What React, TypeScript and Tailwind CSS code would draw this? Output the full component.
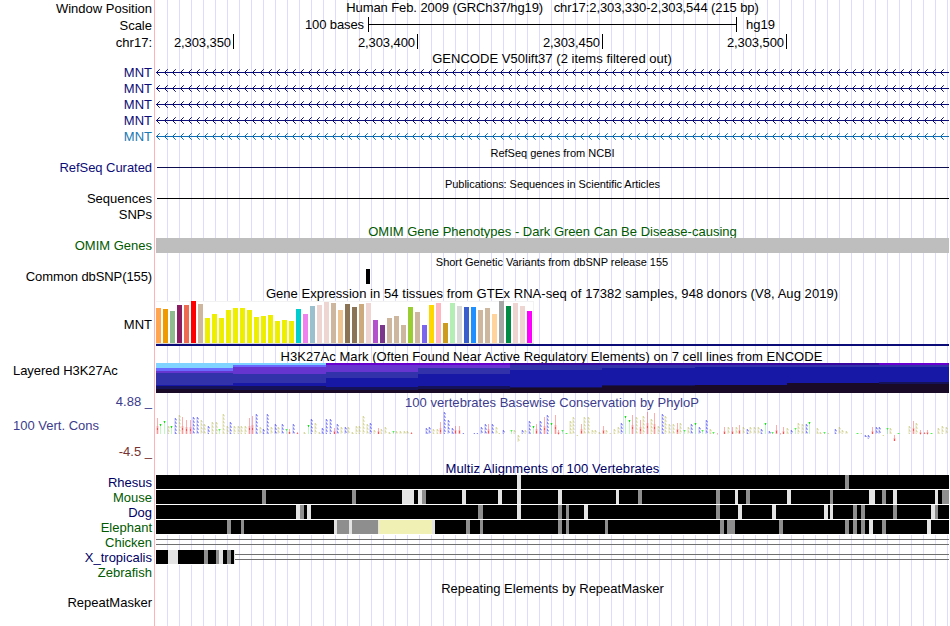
import type { ReactNode } from "react";
import { clsx } from "clsx";

type Span = [from: number, to: number, fill: string];

// left edge of the data area, every track is drawn from here
const X0 = 156;
const WIDTH = 793;

const LIGHT = "#e3e3e3";
const GRAY = "#8e8e8e";
const YELLOW = "#f0f0b4";

const GTEX_HEIGHTS = [
  35, 34, 32, 38, 38, 42, 39, 25, 29, 25, 33, 35, 35, 33, 26, 27, 28, 22, 23, 22, 34, 29, 37, 38, 41, 40, 33,
  39, 36, 39, 40, 23, 18, 25, 27, 18, 36, 31, 18, 38, 40, 20, 40, 37, 36, 36, 33, 35, 29, 42, 37, 40, 37, 32,
];

const GTEX_COLORS = [
  "#ffa54f", "#ee9a00", "#8fbc8f", "#8b1c62", "#ee6a50", "#ff0000", "#cdb79e",
  ...Array<string>(13).fill("#eeee00"),
  "#00cdcd", "#ee82ee", "#9ac0cd", "#eed5d2", "#eed5d2", "#cdb79e", "#eec591", "#8b7355", "#8b7355",
  "#cdaa7d", "#eed5d2", "#b452cd", "#7a378b", "#cdb79e", "#cdb79e", "#cdb79e", "#9acd32", "#cdb79e",
  "#7a67ee", "#ffd700", "#ffb6c1", "#cd9b1d", "#b4eeb4", "#d9d9d9", "#3a5fcd", "#1e90ff", "#cdb79e",
  "#cdb79e", "#ffd39b", "#a6a6a6", "#008b45", "#eed5d2", "#eed5d2", "#ff00ff",
];

const SKY = "#80d2ff";
const PERI = "#6a6aff";
const PURPLE = "#6634ce";
const VIOLET = "#6a00d0";
const DEEP = "#3a06a0";
const INDIGO = "#3232aa";
const BLUE = "#1818a6";
const NAVY = "#16125a";
const DARK = "#190a28";

// [from, to, layers as [y, colour] from the top of the band]
const H3K27AC: [number, number, [number, string][]][] = [
  [156, 233, [[0, SKY], [5, PERI], [8, PURPLE], [10, INDIGO], [22, BLUE], [23, NAVY], [26, DARK]]],
  [233, 326, [[0, SKY], [2, PERI], [4, PURPLE], [11, INDIGO], [20, BLUE], [23, NAVY], [27, DARK]]],
  [326, 418, [[0, VIOLET], [2, PURPLE], [9, INDIGO], [15, BLUE], [24, NAVY], [27, DARK]]],
  [418, 510, [[0, VIOLET], [2, PURPLE], [5, INDIGO], [11, BLUE], [23, NAVY], [26, DARK]]],
  [510, 602, [[0, DEEP], [2, INDIGO], [7, BLUE], [24, NAVY], [25, DARK]]],
  [602, 695, [[0, DEEP], [2, INDIGO], [5, BLUE], [22, NAVY], [23, DARK]]],
  [695, 787, [[0, DEEP], [2, INDIGO], [4, BLUE], [22, DARK]]],
  [787, 879, [[0, DEEP], [2, INDIGO], [4, BLUE], [20, DARK]]],
  [879, 949, [[0, VIOLET], [2, INDIGO], [4, BLUE], [19, NAVY], [21, DARK]]],
];

// one entry per base: nucleotide and its height, "-" where there is no score
const PHYLOP =
  "a16 t10 t13 g8 t8 c16 g19 a17 a14 a14 c17 c17 g14 g10 c8 g12 g12 t5 g20 g8 c12 g8 g8 g8 g8 a16 a18 c20 g7 c5 " +
  "c20 g7 c10 g7 c10 t5 a5 c10 a2 - g2 t9 c15 g11 g2 c6 c15 c15 a6 c10 g7 c7 g7 g2 g8 g8 g18 g10 c11 g4 " +
  "a6 g5 g7 g2 t3 g3 g3 g3 g3 a2 - - - c6 c7 g5 g5 a12 c22 c14 c6 a8 a8 c1 - - c1 c1 c7 c10 " +
  "a10 c10 g7 g1 c4 - t4 g4 g-7 c4 g4 c13 t8 a10 c13 a17 c19 t11 a19 a4 t4 t1 g13 g17 g-1 a10 g17 g17 g4 g4 " +
  "g2 a8 g4 g1 g5 g7 c11 t18 t14 a19 g17 a14 g18 a22 g15 a21 g8 c20 g18 g10 g10 a11 g11 t4 g7 c10 t11 c7 t4 c14 " +
  "g5 t2 a1 - a7 g7 a7 g7 a9 g7 c5 g7 g7 g7 c5 t11 c3 t2 a9 a1 a7 g6 c4 t6 g11 g10 c10 t12 - g6 " +
  "g2 t2 g1 - c5 g7 g4 g3 - - t1 g1 c-2 c-4 a7 c7 c7 g-1 t6 g6 a-6 t1 - - g8 a13 g11 a4 a2 a4 " +
  "t1 - g6 g8 g7";

const BASE_COLORS: Record<string, string> = { a: "#ff3030", t: "#00e800", c: "#3030f0", g: "#a8a830" };

const RHESUS: Span[] = [[517, 521, LIGHT], [845, 849, GRAY]];
const MOUSE: Span[] = [
  [262, 266, GRAY], [352, 356, GRAY], [402, 414, LIGHT], [418, 422, LIGHT], [422, 426, GRAY],
  [462, 466, LIGHT], [498, 502, LIGHT], [517, 521, LIGHT], [558, 562, LIGHT], [616, 619, LIGHT],
  [638, 642, GRAY], [716, 720, GRAY], [735, 738, LIGHT], [746, 750, GRAY], [787, 791, LIGHT],
  [830, 833, GRAY], [869, 875, LIGHT], [882, 886, GRAY], [893, 897, LIGHT], [935, 938, LIGHT], [942, 949, GRAY],
];
const DOG: Span[] = [
  [296, 300, LIGHT], [300, 304, GRAY], [307, 311, LIGHT], [478, 483, GRAY], [517, 521, LIGHT],
  [558, 562, GRAY], [566, 569, GRAY], [584, 588, LIGHT], [716, 720, GRAY], [738, 742, LIGHT],
  [772, 776, LIGHT], [824, 828, LIGHT], [830, 833, LIGHT], [853, 857, GRAY], [861, 865, GRAY],
  [893, 897, GRAY], [931, 935, LIGHT], [935, 938, GRAY],
];
const ELEPHANT: Span[] = [
  [227, 231, GRAY], [241, 244, GRAY], [334, 337, LIGHT], [337, 349, GRAY], [349, 352, LIGHT],
  [352, 378, GRAY], [378, 379, LIGHT], [379, 432, YELLOW], [432, 435, LIGHT], [466, 470, GRAY],
  [480, 483, GRAY], [558, 562, GRAY], [566, 569, GRAY], [605, 608, GRAY], [720, 724, GRAY],
  [727, 735, GRAY], [779, 783, GRAY], [845, 849, GRAY], [853, 857, GRAY], [861, 865, GRAY],
  [869, 873, LIGHT], [882, 886, GRAY], [927, 931, LIGHT],
];
const XENOPUS: Span[] = [
  [168, 178, LIGHT], [204, 208, GRAY], [216, 219, GRAY], [219, 223, LIGHT], [227, 231, GRAY], [234, 235, LIGHT],
];

function Row({ label, height, className, children }: {
  label?: string;
  height: string;
  className?: string;
  children?: ReactNode;
}) {
  return (
    <div className={clsx("flex shrink-0", height)}>
      <div className={clsx("flex w-[152px] shrink-0 items-center justify-end whitespace-nowrap", className)}>
        {label}
      </div>
      <div className="ml-1 w-[793px] shrink-0">{children}</div>
    </div>
  );
}

function Title({ height, className, children }: { height: string; className?: string; children: ReactNode }) {
  return (
    <div className={clsx("ml-[156px] flex w-[793px] shrink-0 items-center justify-center whitespace-pre", height, className)}>
      {children}
    </div>
  );
}

function Guides() {
  return (
    <svg className="absolute inset-0" width="949" height="626" shapeRendering="crispEdges">
      <rect x="154" y="0" width="1" height="626" fill="#ffb4b4" />
      {Array.from({ length: 66 }, (_, i) => (
        <rect key={i} x={167 + i * 12} y="0" width="1" height="626" fill="#dcdcff" />
      ))}
    </svg>
  );
}

function Gene({ color }: { color: string }) {
  return (
    <svg width={WIDTH} height="16" shapeRendering="crispEdges" fill={color}>
      <rect x="0" y="8" width={WIDTH} height="1" />
      {Array.from({ length: 99 }, (_, i) => {
        const x = 1 + i * 8;
        return (
          <g key={i}>
            <rect x={x} y="7" width="1" height="3" />
            <rect x={x + 1} y="6" width="1" height="1" />
            <rect x={x + 1} y="10" width="1" height="1" />
            <rect x={x + 2} y="5" width="1" height="1" opacity="0.75" />
            <rect x={x + 2} y="11" width="1" height="1" opacity="0.75" />
          </g>
        );
      })}
    </svg>
  );
}

function Tick({ label, width }: { label: string; width: string }) {
  return (
    <div className={clsx("flex h-[15px] shrink-0 items-center justify-end border-r border-black pr-[2px] pt-px tracking-[-0.08px]", width)}>
      {label}
    </div>
  );
}

function Gtex() {
  return (
    <svg width={WIDTH} height="45" shapeRendering="crispEdges">
      <rect width="378" height="43" fill="#fff" />
      <rect width="378" height="1" fill="#f2f2f2" />
      <rect x="377" width="1" height="43" fill="#f2f2f2" />
      {GTEX_HEIGHTS.map((h, i) => (
        <rect key={i} x={i * 7} y={42 - h} width="5" height={h} fill={GTEX_COLORS[i]} />
      ))}
      <rect y="42" width="378" height="1" fill="#d8d8d8" />
      <rect y="43" width={WIDTH} height="2" fill="#0c0c78" />
    </svg>
  );
}

function Histone() {
  return (
    <svg width={WIDTH} height="30" shapeRendering="crispEdges">
      {H3K27AC.map(([from, to, layers]) =>
        layers.map(([y, fill]) => (
          <rect key={`${from}-${y}`} x={from - X0} y={y} width={to - from} height={30 - y} fill={fill} />
        ))
      )}
    </svg>
  );
}

function PhyloP() {
  const base = 24;
  return (
    <svg width={WIDTH} height="34">
      {PHYLOP.split(" ").map((item, i) => {
        if (item === "-") return null;
        const kind = item[0];
        const score = Number(item.slice(1));
        const h = Math.abs(score);
        const y = score > 0 ? base - h : base + 1;
        const x = Math.floor(i * 3.688);
        const fill = BASE_COLORS[kind];
        if (kind === "t") {
          return (
            <g key={i} fill={fill}>
              <rect x={x + 1} y={y} width="1" height={Math.min(h, 2)} opacity={h > 7 ? 0.9 : 0.4} />
              <rect x={x} y={y} width="3" height="1" opacity="0.3" />
              <rect x={x + 1} y={y} width="1" height={h} opacity="0.25" />
            </g>
          );
        }
        if (kind === "a") {
          return (
            <g key={i} fill={fill}>
              <rect x={x + 1} y={y} width="1" height={h} opacity="0.4" />
              <rect x={x} y={y + Math.round(h / 2)} width="3" height={h - Math.round(h / 2)} opacity="0.15" />
              <rect x={x + 1} y={y + Math.round(h * 0.65)} width="1" height={Math.min(h / 3, 2)} opacity="0.7" />
            </g>
          );
        }
        const strong = kind === "c";
        return (
          <g key={i} stroke={fill} fill="none">
            <path d={`M${x + 1} ${y}v${h}`} strokeWidth="2" opacity="0.16" />
            <path d={`M${x + 1.5} ${y}v${h}`} strokeDasharray="2 1.5" opacity={strong ? 0.5 : 0.35} />
            <path d={`M${x + 2.5} ${y + 1}v${Math.max(h - 1, 0)}`} strokeDasharray="1.5 2" opacity={strong ? 0.4 : 0.25} />
          </g>
        );
      })}
    </svg>
  );
}

function Alignment({ spans, end = 949 }: { spans: Span[]; end?: number }) {
  return (
    <svg width={WIDTH} height="15" shapeRendering="crispEdges">
      <rect width={WIDTH} height="15" fill="#fff" />
      <rect width={end - X0} height="14" fill="#000" />
      {spans.map(([from, to, fill]) => (
        <rect key={from} x={from - X0} width={to - from} height="14" fill={fill} />
      ))}
    </svg>
  );
}

export default function App() {
  return (
    <div className="relative h-[626px] w-[950px] overflow-hidden bg-white font-['Liberation_Sans',Arial,sans-serif] text-[13px] leading-none text-black">
      <Guides />
      <div className="relative flex flex-col">
        <Row label="Window Position" height="h-[17px]">
          <div className="flex h-[14px] items-center justify-center whitespace-pre tracking-[-0.09px]">
            Human Feb. 2009 (GRCh37/hg19)   chr17:2,303,330-2,303,544 (215 bp)
          </div>
        </Row>
        <Row label="Scale" height="h-[17px]">
          <div className="flex h-[15px] items-center">
            <span className="w-[208px] text-right tracking-[-0.1px]">100 bases</span>
            <div className="ml-1 flex h-full w-[369px] items-center border-x border-black">
              <div className="h-px w-full bg-black" />
            </div>
            <span className="ml-[9px]">hg19</span>
          </div>
        </Row>
        <Row label="chr17:" height="h-[16px]">
          <div className="flex">
            <Tick label="2,303,350" width="w-[78px]" />
            <Tick label="2,303,400" width="w-[184px]" />
            <Tick label="2,303,450" width="w-[185px]" />
            <Tick label="2,303,500" width="w-[184px]" />
          </div>
        </Row>
        <Title height="h-[14px]" className="pr-px pt-[3px] tracking-[0.03px]">GENCODE V50lift37 (2 items filtered out)</Title>

        <Row label="MNT" height="h-[16px]" className="text-[#0c0c78]"><Gene color="#0c0c78" /></Row>
        <Row label="MNT" height="h-[16px]" className="text-[#0c0c78]"><Gene color="#0c0c78" /></Row>
        <Row label="MNT" height="h-[16px]" className="text-[#0c0c78]"><Gene color="#0c0c78" /></Row>
        <Row label="MNT" height="h-[16px]" className="text-[#0c0c78]"><Gene color="#0c0c78" /></Row>
        <Row label="MNT" height="h-[16px]" className="text-[#1878b4]"><Gene color="#0c6cb4" /></Row>

        <Title height="h-[16px]" className="pt-[2px] text-[11px]">RefSeq genes from NCBI</Title>
        <Row label="RefSeq Curated" height="h-[15px]" className="tracking-[-0.05px] text-[#0c0c78]">
          <div className="ml-px mt-[7px] h-px bg-[#0c0c50]" />
        </Row>
        <Title height="h-[16px]" className="pt-[2px] text-[11px] tracking-[-0.06px]">
          Publications: Sequences in Scientific Articles
        </Title>
        <Row label="Sequences" height="h-[15px]">
          <div className="ml-px mt-[7px] h-px bg-black" />
        </Row>
        <Row label="SNPs" height="h-[16px]" />

        <Title height="h-[16px]" className="pt-[2px] text-[#005a00]">
          OMIM Gene Phenotypes - Dark Green Can Be Disease-causing
        </Title>
        <Row label="OMIM Genes" height="h-[15px]" className="text-[#005a00]">
          <div className="h-full bg-[#bebebe]" />
        </Row>
        <Title height="h-[16px]" className="pr-px pt-[2px] text-[11px] tracking-[-0.02px]">
          Short Genetic Variants from dbSNP release 155
        </Title>
        <Row label="Common dbSNP(155)" height="h-[16px]" className="pb-[2px] tracking-[-0.1px]">
          <div className="ml-[210px] h-[15px] w-1 bg-black" />
        </Row>

        <Title height="h-[16px]" className="pr-px pt-px tracking-[0.055px]">
          Gene Expression in 54 tissues from GTEx RNA-seq of 17382 samples, 948 donors (V8, Aug 2019)
        </Title>
        <Row label="MNT" height="h-[45px]" className="pt-[2px]"><Gtex /></Row>
        <Title height="h-[17px]" className="pr-[2px] pt-[4px] tracking-[0.05px]">
          H3K27Ac Mark (Often Found Near Active Regulatory Elements) on 7 cell lines from ENCODE
        </Title>
        <div className="flex h-[30px]">
          <div className="w-[156px] shrink-0 pl-[13px] pt-px tracking-[-0.05px]">Layered H3K27Ac</div>
          <div className="w-[793px] shrink-0"><Histone /></div>
        </div>

        <div className="flex h-[67px] text-[#3c3c8c]">
          <div className="flex w-[156px] shrink-0 flex-col">
            <div className="mr-1 mt-[2px] text-right">4.88 _</div>
            <div className="mt-[11px] pl-[13px]">100 Vert. Cons</div>
            <div className="mr-1 mt-[13px] text-right text-[#783232]">-4.5 _</div>
          </div>
          <div className="w-[793px] shrink-0">
            <div className="h-[17px] pr-px pt-[3px] text-center tracking-[0.04px]">
              100 vertebrates Basewise Conservation by PhyloP
            </div>
            <PhyloP />
          </div>
        </div>

        <Title height="h-[15px]" className="pt-[2px] tracking-[0.08px] text-[#000064]">Multiz Alignments of 100 Vertebrates</Title>
        <Row label="Rhesus" height="h-[15px]" className="text-[#000064]"><Alignment spans={RHESUS} /></Row>
        <Row label="Mouse" height="h-[15px]" className="text-[#005a00]"><Alignment spans={MOUSE} /></Row>
        <Row label="Dog" height="h-[15px]" className="text-[#000064]"><Alignment spans={DOG} /></Row>
        <Row label="Elephant" height="h-[15px]" className="text-[#005a00]"><Alignment spans={ELEPHANT} /></Row>
        <Row label="Chicken" height="h-[15px]" className="text-[#005a00]">
          <div className="mt-1 h-[6px] border-y border-[#707070]" />
        </Row>
        <Row label="X_tropicalis" height="h-[15px]" className="text-[#000064]">
          <div className="flex">
            <div className="w-[79px] shrink-0 overflow-hidden"><Alignment spans={XENOPUS} end={235} /></div>
            <div className="mt-1 h-[6px] grow border-y border-[#707070]" />
          </div>
        </Row>
        <Row label="Zebrafish" height="h-[15px]" className="text-[#005a00]" />
        <Title height="h-[15px]" className="pt-[2px]">Repeating Elements by RepeatMasker</Title>
        <Row label="RepeatMasker" height="h-[15px]" />
      </div>
    </div>
  );
}
